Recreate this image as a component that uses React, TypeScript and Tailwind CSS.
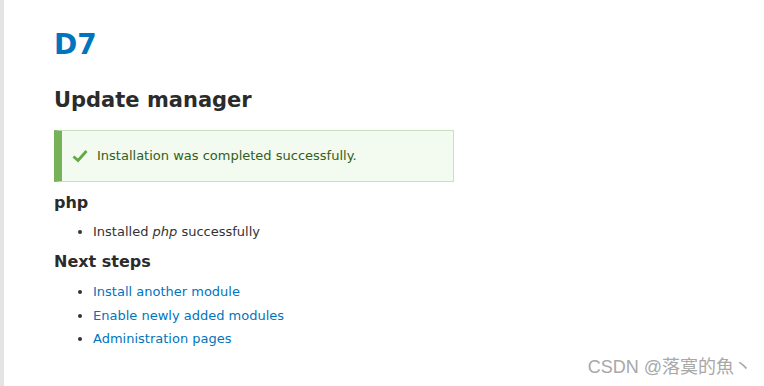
import React from 'react';

const links = ['Install another module', 'Enable newly added modules', 'Administration pages'];

const App: React.FC = () => {
  return (
    <div className="relative flex h-[386px] w-[764px] overflow-hidden bg-white text-[13px] text-[#333] [font-family:'DejaVu_Sans',sans-serif]">
      <div className="w-[4px] shrink-0 bg-[#e4e4e4]"></div>
      <div className="pl-[50px] pt-[28px]">
        <h1 className="text-[28px] font-bold leading-[34px] text-[#0074bd]">D7</h1>
        <h1 className="mt-[24px] text-[21px] font-bold leading-[28px] text-[#2b2b2b]">Update manager</h1>

        <div className="mt-[16px] flex h-[52px] w-[400px] items-center border border-l-[8px] border-[#c9e1bd] border-l-[#77b259] bg-[#f3faef] pl-[10px] text-[#325e1c]">
          <svg className="mr-[9px] h-[14px] w-[16px]" viewBox="0 0 16 14">
            <path d="M1.5 7.5 L6 11.5 L14.5 2" fill="none" stroke="#64aa43" strokeWidth="2.8" />
          </svg>
          <span>Installation was completed successfully.</span>
        </div>

        <h2 className="mt-[10px] text-[16px] font-bold leading-[22px] text-[#2b2b2b]">php</h2>
        <ul className="mt-[8px] list-disc pl-[39px]">
          <li className="leading-[20px]">
            Installed <em>php</em> successfully
          </li>
        </ul>

        <h2 className="mt-[9px] text-[16px] font-bold leading-[22px] text-[#2b2b2b]">Next steps</h2>
        <ul className="mt-[9px] list-disc pl-[39px]">
          {links.map((l) => (
            <li key={l} className="mb-[3.5px] leading-[20px]">
              <a href="#" className="text-[#0074bd]">{l}</a>
            </li>
          ))}
        </ul>
      </div>

      <div className="absolute bottom-[8px] right-[12px] text-[18px] leading-[22px] text-[#a8a8a8] [font-family:'Liberation_Sans','Noto_Sans_CJK_SC',sans-serif]">
        CSDN @落寞的魚丶
      </div>
    </div>
  );
};

export default App;
